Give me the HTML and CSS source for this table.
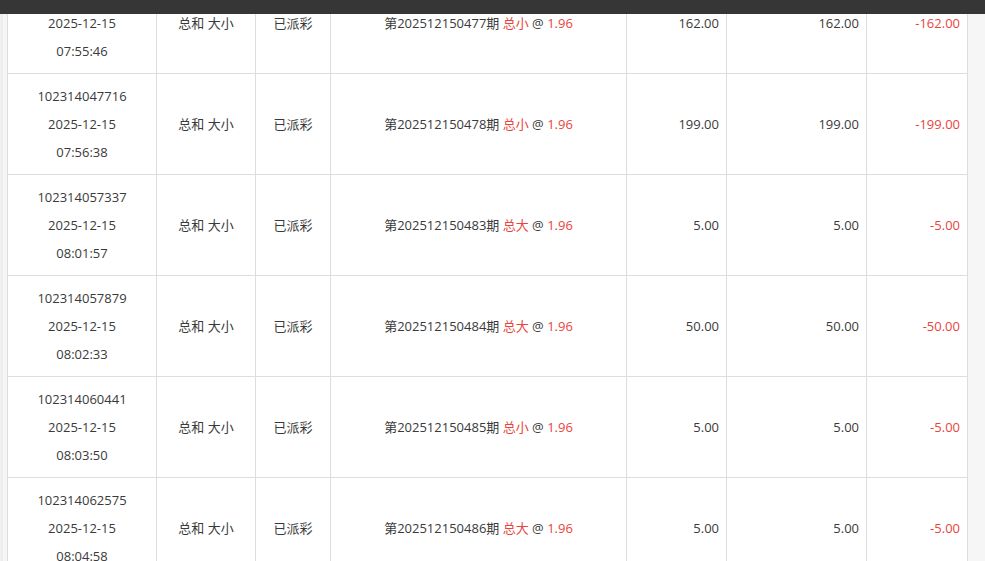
FILE: index.html
```html
<!DOCTYPE html>
<html lang="zh-CN">
<head>
<meta charset="utf-8">
<title>投注记录</title>
<link rel="stylesheet" href="styles.css">
</head>
<body>
<div class="topbar"></div>
<div class="viewport">
  <table class="records">
    <colgroup>
      <col class="c-id"><col class="c-play"><col class="c-status"><col class="c-content"><col class="c-amt"><col class="c-valid"><col class="c-win">
    </colgroup>
    <tbody>
      <tr>
        <td class="center">102314045263<br>2025-12-15<br>07:55:46</td>
        <td class="center">总和 大小</td>
        <td class="center">已派彩</td>
        <td class="center">第202512150477期 <span class="red">总小</span> @ <span class="red">1.96</span></td>
        <td class="right">162.00</td>
        <td class="right">162.00</td>
        <td class="right red">-162.00</td>
      </tr>
      <tr>
        <td class="center">102314047716<br>2025-12-15<br>07:56:38</td>
        <td class="center">总和 大小</td>
        <td class="center">已派彩</td>
        <td class="center">第202512150478期 <span class="red">总小</span> @ <span class="red">1.96</span></td>
        <td class="right">199.00</td>
        <td class="right">199.00</td>
        <td class="right red">-199.00</td>
      </tr>
      <tr>
        <td class="center">102314057337<br>2025-12-15<br>08:01:57</td>
        <td class="center">总和 大小</td>
        <td class="center">已派彩</td>
        <td class="center">第202512150483期 <span class="red">总大</span> @ <span class="red">1.96</span></td>
        <td class="right">5.00</td>
        <td class="right">5.00</td>
        <td class="right red">-5.00</td>
      </tr>
      <tr>
        <td class="center">102314057879<br>2025-12-15<br>08:02:33</td>
        <td class="center">总和 大小</td>
        <td class="center">已派彩</td>
        <td class="center">第202512150484期 <span class="red">总大</span> @ <span class="red">1.96</span></td>
        <td class="right">50.00</td>
        <td class="right">50.00</td>
        <td class="right red">-50.00</td>
      </tr>
      <tr>
        <td class="center">102314060441<br>2025-12-15<br>08:03:50</td>
        <td class="center">总和 大小</td>
        <td class="center">已派彩</td>
        <td class="center">第202512150485期 <span class="red">总小</span> @ <span class="red">1.96</span></td>
        <td class="right">5.00</td>
        <td class="right">5.00</td>
        <td class="right red">-5.00</td>
      </tr>
      <tr>
        <td class="center">102314062575<br>2025-12-15<br>08:04:58</td>
        <td class="center">总和 大小</td>
        <td class="center">已派彩</td>
        <td class="center">第202512150486期 <span class="red">总大</span> @ <span class="red">1.96</span></td>
        <td class="right">5.00</td>
        <td class="right">5.00</td>
        <td class="right red">-5.00</td>
      </tr>
    </tbody>
  </table>
</div>
</body>
</html>
```

FILE: styles.css
```css
html, body {
  margin: 0;
  padding: 0;
  height: 100%;
  overflow: hidden;
}
body {
  background: #f6f6f6;
  font-family: "Open Sans", "Noto Sans CJK SC", sans-serif;
  font-size: 13px;
  color: #3a3a3a;
}
.topbar {
  position: fixed;
  top: 0;
  left: 0;
  right: 0;
  height: 14px;
  background: #363636;
  z-index: 2;
}
.viewport {
  height: 100%;
  overflow: hidden;
  padding-left: 7px;
  background: linear-gradient(to right, #f3f3f3 0, #e9e9e9 2px, #f5f5f5 3px, #f5f5f5 7px, transparent 7px);
}
.records {
  margin-top: -28px;
  width: 960px;
  table-layout: fixed;
  border-collapse: collapse;
  background: #fff;
}
.c-id { width: 149px; }
.c-play { width: 99px; }
.c-status { width: 75px; }
.c-content { width: 296px; }
.c-amt { width: 100px; }
.c-valid { width: 140px; }
.c-win { width: 101px; }
.records td {
  border: 1px solid #dddddd;
  height: 84px;
  padding: 8px 7px 8px 7px;
  line-height: 28px;
  vertical-align: middle;
  white-space: nowrap;
}
.records td.center { text-align: center; }
.records td.right { text-align: right; }
.red { color: #e8453c; }
```
